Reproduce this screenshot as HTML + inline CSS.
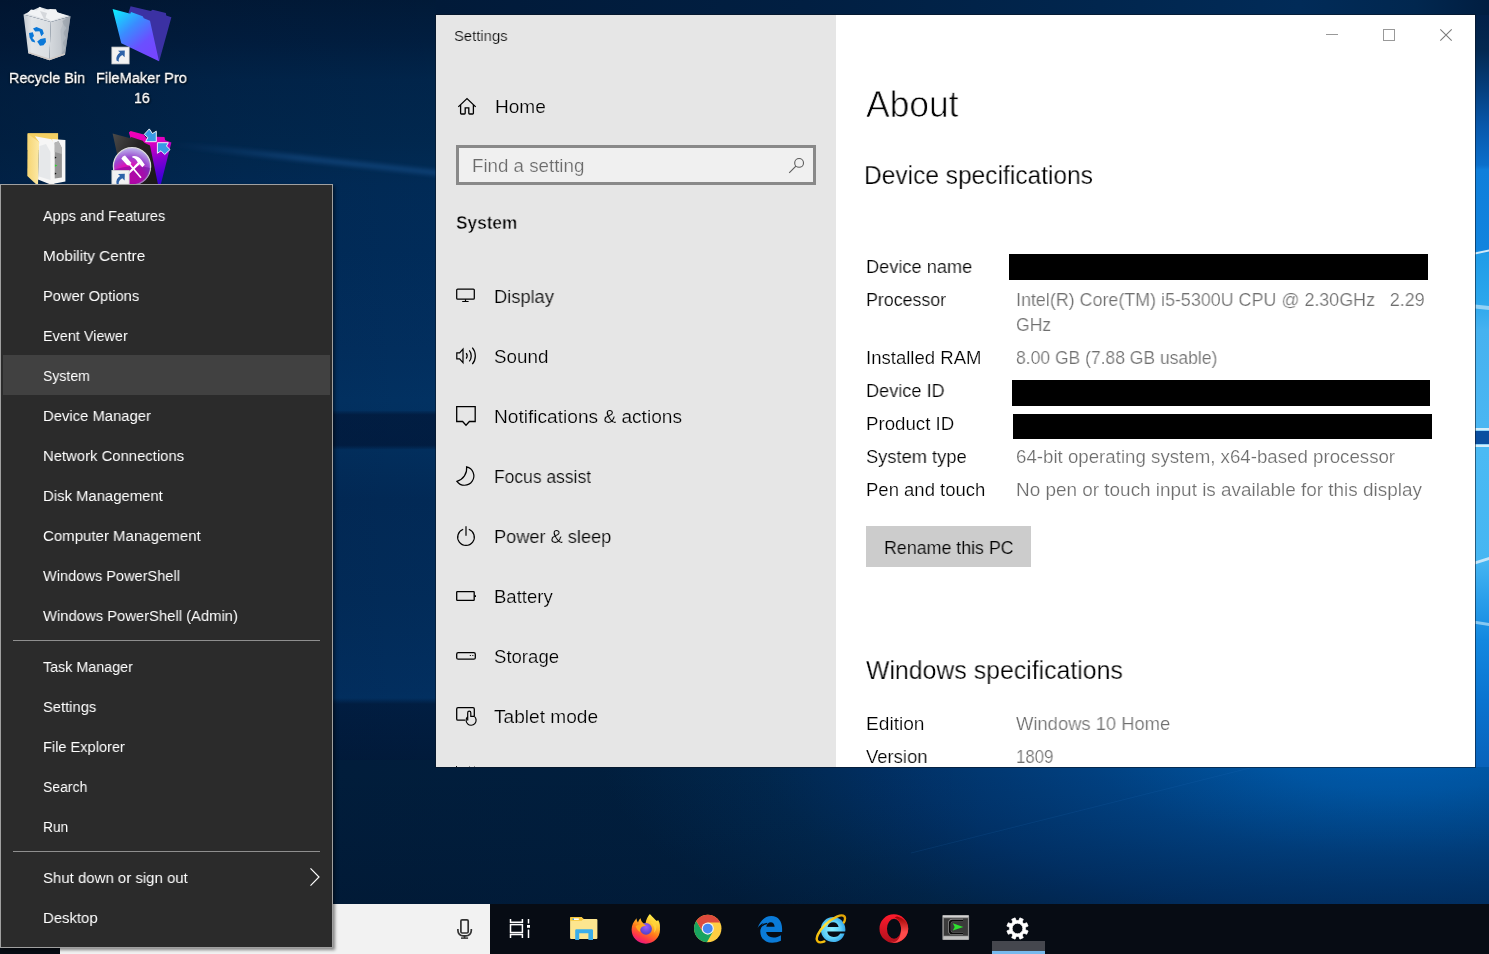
<!DOCTYPE html>
<html lang="en">
<head>
<meta charset="utf-8">
<title>Settings - About</title>
<style>
html,body{margin:0;padding:0;}
html{background:#011530;overflow:hidden;}
body{width:1489px;height:954px;overflow:hidden;position:relative;background:#03204b;font-family:"Liberation Sans",sans-serif;}
.abs{position:absolute;}
.t{position:absolute;white-space:pre;line-height:1;transform-origin:0 0;will-change:transform;}
.m{font-size:15.5px;color:#fff;}
.ti{font-size:15.5px;color:#000;}
.s,.l,.v,.bt,.ph,.sh{font-size:18.5px;color:#000;}
.v{color:#6e6e6e;}
.ph{color:#6b6b6b;}
.sh{font-weight:700;}
.h1{font-size:36px;color:#000;}
.h2{font-size:25.6px;color:#000;}
.l,.v{-webkit-text-stroke:.2px #fff;}
.h2{-webkit-text-stroke:.25px #fff;}
.h1{-webkit-text-stroke:.75px #fff;}
.s,.ti{-webkit-text-stroke:.2px #e6e6e6;}
.sh{-webkit-text-stroke:.5px #e6e6e6;}
.ph{-webkit-text-stroke:.2px #f1f1f1;}
.bt{-webkit-text-stroke:.2px #ccc;}
.d{font-size:15.5px;color:#fff;-webkit-text-stroke:.3px #fff;text-shadow:1px 1px 2px rgba(0,0,0,.9),0 0 3px rgba(0,0,0,.6);}
#wall{position:absolute;left:0;top:0;width:1489px;height:954px;}
#win{position:absolute;left:436px;top:15px;width:1039px;height:752px;background:#fff;overflow:hidden;box-shadow:0 0 0 1px rgba(10,20,34,.55);}
#side{position:absolute;left:0;top:0;width:400px;height:752px;background:#e6e6e6;}
#search{position:absolute;left:456px;top:145px;width:354px;height:34px;border:3px solid #898989;background:#f0f0f0;}
.blk{position:absolute;background:#000;}
#btn{position:absolute;left:866px;top:526px;width:165px;height:41px;background:#ccc;}
#menu{position:absolute;left:0;top:184px;width:331px;height:762px;border:1px solid #a0a0a0;background:#2b2b2b;box-shadow:2px 2px 3px rgba(0,0,0,.45);}
#hl{position:absolute;left:3px;top:355px;width:327px;height:40px;background:#414141;}
.sep{position:absolute;left:13px;width:307px;height:1px;background:#8f8f8f;}
#taskbar{position:absolute;left:0;top:904px;width:1489px;height:50px;background:#070c14;}
#tsearch{position:absolute;left:60px;top:904px;width:430px;height:50px;background:#f2f2f2;}
#active{position:absolute;left:992px;top:941px;width:53px;height:10px;background:#45474e;}
#activeb{position:absolute;left:992px;top:951px;width:53px;height:3px;background:#76b9ed;}
svg{position:absolute;overflow:visible;}
</style>
</head>
<body>
<!--WALL_BEGIN-->
<svg id="wall" width="1489" height="954" viewBox="0 0 1489 954">
<defs>
<linearGradient id="wa" gradientUnits="userSpaceOnUse" x1="0" y1="0" x2="0" y2="954">
<stop offset="0" stop-color="#011a38"/>
<stop offset="0.042" stop-color="#011e40"/>
<stop offset="0.084" stop-color="#01254b"/>
<stop offset="0.147" stop-color="#01284f"/>
<stop offset="0.173" stop-color="#012a53"/>
<stop offset="0.194" stop-color="#012b57"/>
<stop offset="0.262" stop-color="#012c5a"/>
<stop offset="0.367" stop-color="#022f5f"/>
<stop offset="0.42" stop-color="#023263"/>
<stop offset="0.472" stop-color="#022f5e"/>
<stop offset="0.524" stop-color="#022a57"/>
<stop offset="0.629" stop-color="#022c5a"/>
<stop offset="0.723" stop-color="#022f60"/>
<stop offset="0.7317" stop-color="#023061"/>
<stop offset="0.738" stop-color="#011e42"/>
<stop offset="0.807" stop-color="#011a3a"/>
<stop offset="0.948" stop-color="#011530"/>
<stop offset="1" stop-color="#011530"/>
</linearGradient>
<linearGradient id="wah" gradientUnits="userSpaceOnUse" x1="0" y1="0" x2="460" y2="0">
<stop offset="0" stop-color="#000a1e" stop-opacity=".3"/>
<stop offset="0.5" stop-color="#000a1e" stop-opacity=".1"/>
<stop offset="1" stop-color="#000a1e" stop-opacity="0"/>
</linearGradient>
<radialGradient id="wb" gradientUnits="userSpaceOnUse" cx="0" cy="0" r="1" gradientTransform="translate(1400 750) scale(800 270)">
<stop offset="0" stop-color="#005cae"/>
<stop offset="0.16" stop-color="#0055a2"/>
<stop offset="0.39" stop-color="#014080"/>
<stop offset="0.5" stop-color="#013974"/>
<stop offset="0.6" stop-color="#01336a"/>
<stop offset="0.66" stop-color="#012f62"/>
<stop offset="0.8" stop-color="#01284f"/>
<stop offset="1" stop-color="#012040"/>
</radialGradient>
<linearGradient id="wbv" gradientUnits="userSpaceOnUse" x1="333" y1="0" x2="1000" y2="0">
<stop offset="0" stop-color="#000c20" stop-opacity=".16"/>
<stop offset="0.4" stop-color="#000c20" stop-opacity=".08"/>
<stop offset="1" stop-color="#000c20" stop-opacity="0"/>
</linearGradient>
<linearGradient id="wbw" gradientUnits="userSpaceOnUse" x1="0" y1="767" x2="0" y2="904">
<stop offset="0" stop-color="#000c20" stop-opacity="0"/>
<stop offset="0.5" stop-color="#000c20" stop-opacity=".06"/>
<stop offset="1" stop-color="#000c20" stop-opacity=".16"/>
</linearGradient>
<linearGradient id="wc" gradientUnits="userSpaceOnUse" x1="436" y1="0" x2="1489" y2="0">
<stop offset="0" stop-color="#011a39"/>
<stop offset="0.35" stop-color="#011f42"/>
<stop offset="0.63" stop-color="#01264e"/>
<stop offset="0.82" stop-color="#012b58"/>
<stop offset="0.93" stop-color="#01274f"/>
<stop offset="1" stop-color="#011e41"/>
</linearGradient>
<linearGradient id="band" x1="0" y1="0" x2="0" y2="1">
<stop offset="0" stop-color="#011230" stop-opacity="0"/>
<stop offset="0.12" stop-color="#011230" stop-opacity=".62"/>
<stop offset="0.88" stop-color="#011230" stop-opacity=".62"/>
<stop offset="1" stop-color="#011230" stop-opacity="0"/>
</linearGradient>
<linearGradient id="rs" gradientUnits="userSpaceOnUse" x1="0" y1="0" x2="0" y2="954">
<stop offset="0.0157" stop-color="#022048"/>
<stop offset="0.052" stop-color="#032850"/>
<stop offset="0.094" stop-color="#053f7e"/>
<stop offset="0.131" stop-color="#0857aa"/>
<stop offset="0.173" stop-color="#0b6fcb"/>
<stop offset="0.178" stop-color="#0f7fdb"/>
<stop offset="0.262" stop-color="#1184de"/>
<stop offset="0.266" stop-color="#1f9ce8"/>
<stop offset="0.314" stop-color="#2aa6ec"/>
<stop offset="0.346" stop-color="#45b2f0"/>
<stop offset="0.445" stop-color="#4ab6f2"/>
<stop offset="0.472" stop-color="#4abaf4"/>
<stop offset="0.587" stop-color="#45b6f2"/>
<stop offset="0.629" stop-color="#2a9eea"/>
<stop offset="0.671" stop-color="#1288e0"/>
<stop offset="0.734" stop-color="#0a74d0"/>
<stop offset="0.804" stop-color="#0962ba"/>
</linearGradient>
<linearGradient id="beam" gradientUnits="userSpaceOnUse" x1="170" y1="0" x2="300" y2="0"><stop offset="0" stop-color="#2f78c8" stop-opacity="0"/><stop offset="1" stop-color="#2f78c8" stop-opacity="1"/></linearGradient>
<filter id="bl" x="-20%" y="-300%" width="140%" height="700%"><feGaussianBlur stdDeviation="2.2"/></filter>
</defs>
<rect width="1489" height="954" fill="#02244e"/>
<!-- (a) left block -->
<rect x="0" y="0" width="480" height="954" fill="url(#wa)"/>
<rect x="0" y="0" width="480" height="954" fill="url(#wah)"/>
<polygon points="0,410 480,411 480,449 0,450" fill="url(#band)"/>
<polygon points="150,139 480,175 480,180 150,145" fill="url(#beam)" opacity=".3" filter="url(#bl)"/>
<!-- (c) top strip -->
<rect x="436" y="0" width="1053" height="40" fill="url(#wc)"/>
<!-- (b) bottom strip -->
<rect x="333" y="760" width="1156" height="194" fill="url(#wb)"/>
<rect x="333" y="760" width="1156" height="194" fill="url(#wbv)"/>
<rect x="333" y="760" width="1156" height="194" fill="url(#wbw)"/>
<path d="M911,853L1250,768" stroke="#2a7ac8" stroke-width="1" opacity=".14" fill="none"/>
<!-- (d) right strip -->
<rect x="1470" y="15" width="19" height="752" fill="url(#rs)"/>
<rect x="1470" y="431" width="19" height="13" fill="#0a4fa0"/>
<rect x="1470" y="428" width="19" height="2.500" fill="#d4eefb"/>
<rect x="1470" y="444.500" width="19" height="2.500" fill="#d4eefb"/>
<polygon points="1470,253.500 1489,249.500 1489,251.500 1470,255.500" fill="#cfeafa"/>
<polygon points="1470,304 1489,306 1489,310 1470,308" fill="#b4e0f8" opacity=".75"/>
<polygon points="1470,563 1489,557 1489,560 1470,566" fill="#cfeafa" opacity=".9"/>
<polygon points="1470,620 1489,623 1489,626 1470,623" fill="#b4e0f8" opacity=".7"/>
</svg>
<!--WALL_END-->
<div id="desktop">
<!--DESKICONS_BEGIN-->
<svg width="1489" height="954" viewBox="0 0 1489 954" style="left:0;top:0">
<defs>
<linearGradient id="fmf" x1="0.1" y1="0" x2="0.8" y2="0.9"><stop offset="0" stop-color="#0ee8ff"/><stop offset="0.4" stop-color="#3a8cff"/><stop offset="0.75" stop-color="#6a50ff"/><stop offset="1" stop-color="#7446ff"/></linearGradient>
<linearGradient id="fmk" x1="0" y1="0" x2="1" y2="0.6"><stop offset="0" stop-color="#4a4a4a"/><stop offset="0.5" stop-color="#262424"/><stop offset="1" stop-color="#1c1b1b"/></linearGradient>
<linearGradient id="fmm" x1="0" y1="0" x2="0.2" y2="1"><stop offset="0" stop-color="#f400b4"/><stop offset="0.3" stop-color="#e000c0"/><stop offset="0.6" stop-color="#8a00d0"/><stop offset="1" stop-color="#3a00d8"/></linearGradient>
<radialGradient id="fmc" cx="0.45" cy="0.85" r="0.95"><stop offset="0" stop-color="#ff00b0"/><stop offset="0.4" stop-color="#e010b8"/><stop offset="0.62" stop-color="#9a48d0"/><stop offset="0.85" stop-color="#b8a8e8"/><stop offset="1" stop-color="#d0c8f0"/></radialGradient>
<linearGradient id="rbl" x1="0" y1="0" x2="1" y2="0"><stop offset="0" stop-color="#c4cad1"/><stop offset="0.3" stop-color="#e3e6e9"/><stop offset="1" stop-color="#d9dde1"/></linearGradient>
<linearGradient id="rbr" x1="0" y1="0" x2="1" y2="0"><stop offset="0" stop-color="#d6dade"/><stop offset="0.6" stop-color="#c2c7cd"/><stop offset="1" stop-color="#98a0aa"/></linearGradient>
<linearGradient id="fdy" x1="0" y1="0" x2="1" y2="0"><stop offset="0" stop-color="#f6d573"/><stop offset="1" stop-color="#fce9a6"/></linearGradient>
</defs>
<!-- recycle bin -->
<path d="M23.500,14.500L39.800,7L70.500,16.300L50.800,22.100Z" fill="#dfe3e7"/>
<path d="M27,13.500L31,9.500L37,10.500L39.800,6.800L44,10.500L50,9L56,9.200L57.500,12.500L66,15.500L51,21Z" fill="#f1f3f5"/>
<path d="M40,11L47,13L45.500,17.500L51,20.800L44,19Z" fill="#d5d8dc"/>
<path d="M23.500,14.500L50.800,22.100L49.400,60.200L28.300,53.300Z" fill="url(#rbl)"/>
<path d="M50.800,22.100L70.500,16.300L65,54.700L49.400,60.200Z" fill="url(#rbr)"/>
<path d="M70.500,16.300L65,54.700L61.500,56L64,27L62.500,21Z" fill="#9aa3ad" opacity=".7"/>
<path d="M63,24L66.500,28L63,33L66,38L62.500,43L65.500,48L62,53L60.500,30Z" fill="#b4bbc3" opacity=".8"/>
<path d="M28.300,53.300L49.400,60.200L65,54.700L64.800,53.200L49.400,58.600L28.100,51.700Z" fill="#cfc8c4"/>
<g fill="#0b78d8">
<path d="M33,28.500L36.500,27L42.500,29.500L43.800,33.500L41.300,36.300L39.500,31.300L35.200,31.500Z"/>
<path d="M29,33L32.800,32.200L34,36L32.300,38L34.600,40.500L35.200,42.500L31.800,41.500L29.600,37.500Z"/>
<path d="M37.200,41.500L40.500,39L45.500,38L46,42L43.500,45.300L40,45.700Z"/>
</g>
<!-- filemaker pro -->
<path d="M128.500,12.800L130.600,6.200L150.700,11.100L152.700,9.700L165.900,13.100L166.200,15.600L171.400,17.300L159.200,61.200L140,40Z" fill="#3b31a3"/>
<path d="M112.600,9L130.300,13.800L131,12.100L142.700,16.300L143.800,18.300L150,20.800L159,61.200L121.300,43.300Z" fill="url(#fmf)"/>
<g transform="translate(111.900 47.100)">
<rect x="0" y="0" width="17.200" height="16.800" fill="#f2f2f2" stroke="#d4d4d4" stroke-width=".8"/>
<path d="M12.9,3.300L6.100,3.600L8.200,5.500C5.400,7.400 3.900,10 4.600,13.300L6.900,14.600C6.300,11.500 7.700,9.500 10.400,7.900L12.700,10.200Z" fill="#2d62a8"/>
</g>
<!-- folder with docs -->
<path d="M27.600,133.100H58.100V150H27.600Z" fill="#f3cf62"/>
<path d="M52.200,139L65.400,140V181.500L52.200,184Z" fill="#f7f7f7"/>
<path d="M54.600,142.800L58.500,141.300L61.900,148V177.400L54.600,178.500Z" fill="#949494"/>
<path d="M54.600,142.800L58.500,141.300L61.900,148L61.900,154L54.600,152Z" fill="#b5b5b5"/>
<path d="M54.900,164.400L57.300,165.600L54.900,166.800Z" fill="#22dd22"/>
<path d="M54.800,156.500L56.600,157.600L54.800,158.700ZM54.800,172.500L56.600,173.600L54.800,174.700Z" fill="#111"/>
<path d="M34.900,136.200L51.500,139.300L54.300,144.800V186L38,179.400L39.100,142.100Z" fill="#f6f6f6"/>
<path d="M39.500,146L46,144L50.500,152V180L39,176.500Z" fill="#e6e8ea"/>
<path d="M27.600,133.800L39.100,142.100L38,186L27.300,176Z" fill="url(#fdy)"/>
<!-- fm tool -->
<path d="M128.900,132.400L130.600,131L143.800,134.500L146.500,138.600L147,136.500L164.500,136.900L165.200,140.300L171.400,142.400L160.400,186H145Z" fill="url(#fmm)"/>
<path d="M112.600,133.400L130.300,138.300L131.300,136.900L142.700,140.700L144.400,142.800L150,145.500L158.300,186H124Z" fill="url(#fmk)"/>
<g>
<path d="M149.300,128.900L144.300,134.300L147.800,137.600L145.600,141.700L156.300,141.700L156.300,131.200L152.400,133.600Z" fill="#3a9ae6" stroke="#fff" stroke-width=".9"/>
<path d="M157.400,142.700L157.400,153.300L161,150.800L164.700,154.500L170,149.600L166.500,146L168.300,142.700Z" fill="#3a9ae6" stroke="#fff" stroke-width=".9"/>
</g>
<circle cx="132" cy="166.300" r="18.600" fill="url(#fmc)" stroke="#dcdcdc" stroke-width="1.300"/>
<path d="M113.800,170Q132,163 150.500,168Q149,180 140,184L124,184Q115,178 113.800,170Z" fill="#5a0a98" opacity=".45"/>
<g fill="#fff">
<path d="M121.300,158.800Q122.500,156 125,155.600L131.500,163L129,165.500L127,165Z"/>
<path d="M130.300,163.800L141.600,177.200L140.400,178.200L129,165Z"/>
<path d="M132.300,156.200Q138,155.300 141.500,160L144.800,164.700L142.300,167.200L139.600,164.300L126.500,176.500L125.200,175.200L137.800,162.600Q135.500,158.200 132.300,157.600Z"/>
</g>
<g transform="translate(111.900 170.400)">
<rect x="0" y="0" width="17.200" height="16.800" fill="#f2f2f2" stroke="#d4d4d4" stroke-width=".8"/>
<path d="M12.9,3.300L6.100,3.600L8.200,5.500C5.400,7.400 3.900,10 4.600,13.300L6.900,14.600C6.300,11.500 7.700,9.500 10.400,7.900L12.700,10.200Z" fill="#2d62a8"/>
</g>
</svg>
<!--DESKICONS_END-->
<span class="t d" style="left:8.50px;top:70px;transform:scaleX(0.9300)">Recycle Bin</span>
<span class="t d" style="left:96.30px;top:70px;transform:scaleX(0.9431)">FileMaker Pro</span>
<span class="t d" style="left:134.40px;top:90px;transform:scaleX(0.9212)">16</span>
</div>

<div id="win">
  <div id="side"></div>
</div>
<div id="search"></div>
<!--WINICONS_BEGIN-->
<svg width="1489" height="954" viewBox="0 0 1489 954" style="left:0;top:0" fill="none" stroke="#000" stroke-width="1.25" stroke-linejoin="miter">
<!-- window controls -->
<g stroke="#999" stroke-width="1" shape-rendering="crispEdges">
<path d="M1326,34.5H1338"/>
<rect x="1383.5" y="29.5" width="11" height="11"/>
</g>
<path d="M1440.3,29.3L1451.7,40.7M1451.7,29.3L1440.3,40.7" stroke="#7c7c7c" stroke-width="1.1"/>
<!-- home -->
<path d="M458.3,106.9L467,98.6L475.7,106.9" stroke-width="1.3"/>
<path d="M460.6,105V113.2q0,.8 .8,.8H464.4q.8,0 .8,-.8V107.9H468.8V113.2q0,.8 .8,.8H472.6q.8,0 .8,-.8V105" stroke-width="1.3"/>
<!-- search glass -->
<g stroke="#5c5c5c" stroke-width="1.1">
<circle cx="799.1" cy="162.9" r="4.4"/>
<path d="M795.9,166.1L789.2,172.8"/>
</g>
<!-- display -->
<rect x="456.7" y="289" width="17.6" height="10.2" rx="1"/>
<path d="M465.5,299.2V301.5M462.2,301.5H468.6" stroke-width="1.2"/>
<!-- sound -->
<path d="M456.8,352.8H459.6L463,349V362.6L459.6,358.9H456.8Z" stroke-width="1.2"/>
<path d="M466.2,353.2A4.6,4.6 0 0 1 466.2,358.6"/>
<path d="M469.3,350.4A8.8,8.8 0 0 1 469.3,361.4"/>
<path d="M472.3,347.7A12.6,12.6 0 0 1 472.3,364.1"/>
<!-- notifications -->
<path d="M456.7,406.7H475.2V421.5H469.4L466,425.2L462.6,421.5H456.7Z" stroke-width="1.3"/>
<!-- focus assist -->
<path d="M466.6,466.9A9.3,9.3 0 1 1 456.9,481.3A13.2,13.2 0 0 0 466.6,466.9Z" stroke-width="1.2" stroke-linejoin="miter"/>
<!-- power -->
<path d="M463.2,529.3A8.3,8.3 0 1 0 468.8,529.3" stroke-width="1.2"/>
<path d="M466,526.2V535.8" stroke-width="1.4" stroke="#222"/>
<!-- battery -->
<rect x="456.7" y="591.7" width="17.5" height="8.7" rx=".6" stroke-width="1.3"/>
<path d="M475.2,595.2V597" stroke-width="1.6"/>
<!-- storage -->
<rect x="456.7" y="652.7" width="18.6" height="6.5" rx="1.5" stroke-width="1.3"/>
<path d="M469.8,655.5H470.9M472.3,655.5H473.4" stroke-width="1"/>
<!-- tablet mode -->
<path d="M465.2,720.2H458q-1.3,0 -1.3,-1.3V709q0,-1.3 1.3,-1.3H473q1.3,0 1.3,1.3V716.2" stroke-width="1.3"/>
<path d="M467.7,720.6V712.7a1.55,1.55 0 0 1 3.1,0V716.4H474.3" stroke-width="1.2"/>
<path d="M474.3,716.4A5,5 0 1 1 467.7,716.6" stroke-width="1.2"/>
<!-- sidebar-next item sliver -->
<g stroke="none"><rect x="456" y="766" width="1" height="1" fill="#111"/><rect x="469" y="766" width="1" height="1" fill="#8a8a8a"/><rect x="474" y="766" width="1" height="1" fill="#8a8a8a"/></g>
</svg>
<!--WINICONS_END-->
<span class="t ti" style="left:453.85px;top:28px;transform:scaleX(0.9554)">Settings</span>
<span class="t s" style="left:495.10px;top:98px;transform:scaleX(1.0299)">Home</span>
<span class="t s" style="left:494.30px;top:288px;transform:scaleX(0.9877)">Display</span>
<span class="t s" style="left:494.30px;top:348px;transform:scaleX(1.0161)">Sound</span>
<span class="t s" style="left:494.30px;top:408px;transform:scaleX(1.0328)">Notifications &amp; actions</span>
<span class="t s" style="left:494.30px;top:468px;transform:scaleX(0.9440)">Focus assist</span>
<span class="t s" style="left:494.30px;top:528px;transform:scaleX(0.9832)">Power &amp; sleep</span>
<span class="t s" style="left:494.30px;top:588px;transform:scaleX(1.0006)">Battery</span>
<span class="t s" style="left:494.30px;top:648px;transform:scaleX(1.0038)">Storage</span>
<span class="t s" style="left:494.30px;top:708px;transform:scaleX(1.0327)">Tablet mode</span>
<span class="t ph" style="left:471.90px;top:157px;transform:scaleX(1.0115)">Find a setting</span>
<span class="t sh" style="left:456.30px;top:214px;transform:scaleX(0.9323)">System</span>
<div class="blk" style="left:1009px;top:254px;width:419px;height:26px"></div>
<div class="blk" style="left:1012px;top:380px;width:418px;height:26px"></div>
<div class="blk" style="left:1013px;top:414px;width:419px;height:25px"></div>
<div id="btn"></div>
<span class="t h1" style="left:866.10px;top:87px;transform:scaleX(0.9839)">About</span>
<span class="t h2" style="left:863.80px;top:163px;transform:scaleX(0.9578)">Device specifications</span>
<span class="t h2" style="left:866.30px;top:658px;transform:scaleX(0.9708)">Windows specifications</span>
<span class="t l" style="left:865.90px;top:258px;transform:scaleX(0.9836)">Device name</span>
<span class="t l" style="left:865.90px;top:291px;transform:scaleX(0.9630)">Processor</span>
<span class="t l" style="left:865.90px;top:349px;transform:scaleX(1.0032)">Installed RAM</span>
<span class="t l" style="left:865.90px;top:382px;transform:scaleX(0.9810)">Device ID</span>
<span class="t l" style="left:865.90px;top:415px;transform:scaleX(1.0096)">Product ID</span>
<span class="t l" style="left:865.90px;top:448px;transform:scaleX(0.9889)">System type</span>
<span class="t l" style="left:865.90px;top:481px;transform:scaleX(0.9998)">Pen and touch</span>
<span class="t l" style="left:865.90px;top:715px;transform:scaleX(1.0338)">Edition</span>
<span class="t l" style="left:865.90px;top:748px;transform:scaleX(0.9950)">Version</span>
<span class="t v" style="left:1015.90px;top:291px;transform:scaleX(0.9665)">Intel(R) Core(TM) i5-5300U CPU @ 2.30GHz   2.29</span>
<span class="t v" style="left:1015.90px;top:316px;transform:scaleX(0.9486)">GHz</span>
<span class="t v" style="left:1015.90px;top:349px;transform:scaleX(0.9456)">8.00 GB (7.88 GB usable)</span>
<span class="t v" style="left:1015.90px;top:448px;transform:scaleX(1.0100)">64-bit operating system, x64-based processor</span>
<span class="t v" style="left:1015.90px;top:481px;transform:scaleX(1.0226)">No pen or touch input is available for this display</span>
<span class="t v" style="left:1015.90px;top:715px;transform:scaleX(0.9935)">Windows 10 Home</span>
<span class="t v" style="left:1015.90px;top:748px;transform:scaleX(0.9118)">1809</span>
<span class="t bt" style="left:883.60px;top:539px;transform:scaleX(0.9626)">Rename this PC</span>

<div id="taskbar"></div>
<div id="tsearch"></div>
<div id="active"></div><div id="activeb"></div>
<!--TASKICONS_BEGIN-->
<svg width="1489" height="954" viewBox="0 0 1489 954" style="left:0;top:0">
<defs>
<clipPath id="chc"><circle cx="707.75" cy="928.55" r="13.7"/></clipPath>
<linearGradient id="ffg" x1="0.75" y1="0.05" x2="0.3" y2="1">
<stop offset="0" stop-color="#fff04a"/><stop offset="0.3" stop-color="#ffbd2e"/><stop offset="0.55" stop-color="#ff7a1a"/><stop offset="0.8" stop-color="#ff3648"/><stop offset="1" stop-color="#e31587"/>
</linearGradient>
<radialGradient id="ffp" cx="0.5" cy="0.35" r="0.7">
<stop offset="0" stop-color="#9a5cff"/><stop offset="1" stop-color="#4a3fc4"/>
</radialGradient>
<linearGradient id="opl" x1="0" y1="0" x2="0" y2="1"><stop offset="0" stop-color="#ff1b2d"/><stop offset="1" stop-color="#b0101c"/></linearGradient>
<linearGradient id="opr" x1="0" y1="0" x2="0" y2="1"><stop offset="0" stop-color="#9c0000"/><stop offset="0.6" stop-color="#ff4b4b"/><stop offset="1" stop-color="#ff4b4b"/></linearGradient>
<radialGradient id="ieg" cx="0.45" cy="0.5" r="0.6"><stop offset="0" stop-color="#8ef0ff"/><stop offset="0.6" stop-color="#5fd0f8"/><stop offset="1" stop-color="#2a9ce6"/></radialGradient>
<linearGradient id="ier" x1="0" y1="1" x2="1" y2="0"><stop offset="0" stop-color="#f0b400"/><stop offset="0.5" stop-color="#ffe23a"/><stop offset="1" stop-color="#e0a000"/></linearGradient>
</defs>
<!-- mic -->
<g fill="none" stroke="#333" stroke-width="1.7">
<rect x="460.9" y="919.8" width="7.3" height="13.2" rx="1.2"/>
<path d="M457.9,929V930.6a5.2,5.2 0 0 0 5.2,5.2H466.1a5.2,5.2 0 0 0 5.2,-5.2V929"/>
<path d="M464.55,935.8V938.3" stroke-width="1.5"/><path d="M461,938.1H468.100" stroke-width="1.5"/>
</g>
<!-- task view -->
<g fill="none" stroke="#fff" stroke-width="1.5">
<rect x="510.5" y="924.6" width="11.9" height="7.9"/>
<path d="M510.5,919V922.2H522.4V919"/>
<path d="M510.5,938V934.6H522.4V938"/>
<path d="M528.5,919V923.6M528.5,929.4V938"/>
</g>
<rect x="527" y="925" width="3" height="2.8" fill="#fff"/>
<!-- file explorer -->
<path d="M570.1,918.2q0,-1.3 1.3,-1.3H581.4L583.6,918.9H596.4q1,0 1,1V938q0,1 -1,1H571.1q-1,0 -1,-1Z" fill="#fde68f"/>
<path d="M570.1,918.2q0,-1.3 1.3,-1.3H581.4L583.6,918.9L581.6,920.7H570.1Z" fill="#f7c73a"/>
<rect x="573.2" y="918.4" width="5.6" height="1.6" fill="#fff"/>
<rect x="572.6" y="918.4" width="1.4" height="1.6" fill="#3aa5e8"/>
<path d="M575.2,940.1V930.4q0,-1.2 1.2,-1.2H591.8q1.2,0 1.2,1.2V940.1H588.4V933.2H579.2V940.1Z" fill="#3aaeea"/>
<!-- firefox -->
<path d="M645.8,943.7c-8,0 -14.2,-6.2 -14.2,-13.9c0,-4.6 1.9,-8 4.9,-11.5c.1,1.7 .6,3 1.5,4.100c.5,-1.700 1.400,-3.100 2.600,-4.100c.2,2.200 1.300,3.900 3.300,5.300h1.600c.6,-4.200 2.400,-7.500 4.400,-9.600c2.800,3.200 5,5.300 6.900,7.100c.4,-.5 .9,-.8 1.500,-.9c2,3.300 1.700,5.400 1.700,9.600c0,7.700 -6.200,13.900 -14.200,13.900Z" fill="url(#ffg)"/>
<circle cx="646" cy="928.8" r="5.9" fill="url(#ffp)"/>
<path d="M635.600,926.200c1.800,-1.600 4.400,-1.200 6.200,-2.400c1.800,0 3.200,1 4.200,1.800c-1.600,1 -3.600,.6 -4.900,2.100c-1,1.200 -1.300,2.700 -.7,4.400c-2.100,-1 -3.600,-2.800 -4.800,-5.900Z" fill="#ffa61e"/>
<path d="M650.5,922.5q2.400,1.600 3.600,4.400q1,3.400 -.2,6.200q2.800,-2.800 2.600,-6.600q-.4,-3.600 -3,-5.600q-1.400,.4 -3,1.600Z" fill="#ffd43a" opacity=".9"/>
<!-- chrome -->
<g clip-path="url(#chc)">
<rect x="692.75" y="913.55" width="30" height="30" fill="#ffce42"/>
<path d="M707.75,928.55 L702.47,931.60 L694.83,918.38 L687.75,916.55 L687.75,948.55 L705.40,944.82 L713.03,931.60Z" fill="#18a45f"/>
<path d="M707.75,928.55 L707.75,922.4499999999999 L727.75,922.4499999999999 L727.75,908.55 L687.75,908.55 L694.83,918.38 L702.47,931.60Z" fill="#de4b3c"/>
</g>
<circle cx="707.75" cy="928.55" r="6.1" fill="#f3f3f3"/>
<circle cx="707.75" cy="928.55" r="4.9" fill="#4687f2"/>
<!-- edge -->
<path d="M757.6,927.9c2.800,-7.600 7.800,-11.900 13.800,-11.900c7,0 10.700,5.500 10.700,12.700v3.400h-15.900c.4,3.200 3.100,5.400 7.300,5.400c2.700,0 5,-.7 7.400,-2.300v5.600c-2.400,1.300 -5.400,2 -8.700,2c-7.100,0 -11.900,-4.500 -11.900,-11.300c0,-3.200 1.100,-6.100 3.300,-8.400c-2.400,.9 -4.300,2.500 -6,4.800ZM766.300,926.700h8.300c-.1,-2.700 -1.500,-4.500 -3.900,-4.500c-2.200,0 -3.800,1.700 -4.400,4.500Z" fill="#0a7bd8"/>
<path d="M759.6,929.3C761,925.9 763.6,923.9 767.2,923.3" fill="none" stroke="#070c14" stroke-width="1.3"/>
<!-- ie -->
<path d="M845.2,931.600h-17.900c.4,3.300 2.900,5.400 6.500,5.400c2.900,0 5.200,-1.300 6.400,-3.600h4.400c-1.500,5.100 -5.700,8.600 -11.300,8.600c-7,0 -12.500,-5.500 -12.500,-12.500c0,-7 5.500,-12.500 12.300,-12.500c6.800,0 12.300,5.400 12.300,12.400c0,.8 -.1,1.500 -.2,2.200ZM827.500,926.900h11.100c-.6,-2.800 -2.700,-4.600 -5.500,-4.600c-2.800,0 -4.900,1.800 -5.600,4.600Z" fill="url(#ieg)"/>
<path d="M843.900,922.500c1.300,-2.700 1.500,-4.900 .4,-6.100c-2.600,-2.800 -10.900,.7 -18.400,7.800c-7.400,7 -11,14.400 -8.200,17.200c1.300,1.300 3.700,1.200 6.700,0" fill="none" stroke="url(#ier)" stroke-width="2.4" stroke-linecap="round"/>
<!-- opera -->
<path d="M893.850,914.300a14.350,14.350 0 1 0 0,28.700a14.350,14.350 0 1 0 0,-28.700ZM894.050,918.700a7.050,10.050 0 1 1 0,20.100a7.050,10.050 0 1 1 0,-20.100Z" fill="url(#opl)" fill-rule="evenodd"/>
<path d="M897.300,916.500c5.600,1.300 10.900,5.800 10.900,12.100c0,6.700 -4.600,12.200 -11.200,13.900c-2.400,.4 -4.600,.1 -6.600,-1.200c1.100,.5 2.400,.7 3.600,.7c3.900,0 7.100,-5.900 7.100,-13.300c0,-4.800 -2.300,-9.400 -6.400,-11.200c.8,-.6 1.700,-.9 2.600,-1Z" fill="url(#opr)"/>
<!-- cygwin -->
<rect x="942.3" y="915.1" width="26.8" height="25" rx=".8" fill="#8e8e8e"/>
<rect x="942.9" y="915.5" width="25.600" height="1.800" fill="#d2d2d2"/>
<rect x="943.9" y="918.200" width="24" height="17.500" fill="#3b3b3b"/>
<rect x="943.3" y="936.3" width="25.200" height="3.200" fill="#c2c2c2"/>
<path d="M963,920.300H952.500q-3,0 -3,3V930.500q0,3 3,3H963" fill="none" stroke="#8a8a8a" stroke-width="3"/>
<path d="M963,920.600H952.500q-2.700,0 -2.700,2.700V930.700q0,2.700 2.700,2.700H963" fill="none" stroke="#0a0a0a" stroke-width="1.900"/>
<path d="M952.800,923.300L963.400,926.900L952.800,930.400L954.700,926.900Z" fill="#2fe02f"/>
<!-- gear -->
<path d="M1018.72,920.59 L1019.91,917.87 L1023.31,919.28 L1022.23,922.05 L1023.95,923.77 L1026.72,922.69 L1028.13,926.09 L1025.41,927.28 L1025.41,929.72 L1028.13,930.91 L1026.72,934.31 L1023.95,933.23 L1022.23,934.95 L1023.31,937.72 L1019.91,939.13 L1018.72,936.41 L1016.28,936.41 L1015.09,939.13 L1011.69,937.72 L1012.77,934.95 L1011.05,933.23 L1008.28,934.31 L1006.87,930.91 L1009.59,929.72 L1009.59,927.28 L1006.87,926.09 L1008.28,922.69 L1011.05,923.77 L1012.77,922.05 L1011.69,919.28 L1015.09,917.87 L1016.28,920.59Z M1012.20,928.50 a5.3,5.3 0 1 0 10.6,0 a5.3,5.3 0 1 0 -10.6,0Z" fill="#fff" fill-rule="evenodd" stroke="#fff" stroke-width=".7" stroke-linejoin="round"/>
</svg>
<!--TASKICONS_END-->

<div id="menu"></div>
<div id="hl"></div>
<div class="sep" style="top:640px"></div>
<div class="sep" style="top:851px"></div>
<!--MENUICONS_BEGIN-->
<svg width="1489" height="954" viewBox="0 0 1489 954" style="left:0;top:0" fill="none">
<path d="M310.5,868.3L319,877L310.5,885.7" stroke="#fff" stroke-width="1.2"/>
</svg>
<!--MENUICONS_END-->
<nav aria-label="Quick Link menu">
<span class="t m" style="left:43.00px;top:208px;transform:scaleX(0.9329)">Apps and Features</span>
<span class="t m" style="left:43.00px;top:248px;transform:scaleX(0.9889)">Mobility Centre</span>
<span class="t m" style="left:43.00px;top:288px;transform:scaleX(0.9456)">Power Options</span>
<span class="t m" style="left:43.00px;top:328px;transform:scaleX(0.9298)">Event Viewer</span>
<span class="t m" style="left:43.00px;top:368px;transform:scaleX(0.9063)">System</span>
<span class="t m" style="left:43.00px;top:408px;transform:scaleX(0.9566)">Device Manager</span>
<span class="t m" style="left:43.00px;top:448px;transform:scaleX(0.9579)">Network Connections</span>
<span class="t m" style="left:43.00px;top:488px;transform:scaleX(0.9591)">Disk Management</span>
<span class="t m" style="left:43.00px;top:528px;transform:scaleX(0.9684)">Computer Management</span>
<span class="t m" style="left:43.00px;top:568px;transform:scaleX(0.9405)">Windows PowerShell</span>
<span class="t m" style="left:43.00px;top:608px;transform:scaleX(0.9547)">Windows PowerShell (Admin)</span>
<span class="t m" style="left:43.00px;top:659px;transform:scaleX(0.9226)">Task Manager</span>
<span class="t m" style="left:43.00px;top:699px;transform:scaleX(0.9503)">Settings</span>
<span class="t m" style="left:43.00px;top:739px;transform:scaleX(0.9408)">File Explorer</span>
<span class="t m" style="left:43.00px;top:779px;transform:scaleX(0.9031)">Search</span>
<span class="t m" style="left:43.00px;top:819px;transform:scaleX(0.8855)">Run</span>
<span class="t m" style="left:43.00px;top:870px;transform:scaleX(0.9656)">Shut down or sign out</span>
<span class="t m" style="left:43.00px;top:910px;transform:scaleX(0.9618)">Desktop</span>
</nav>
</body>
</html>
